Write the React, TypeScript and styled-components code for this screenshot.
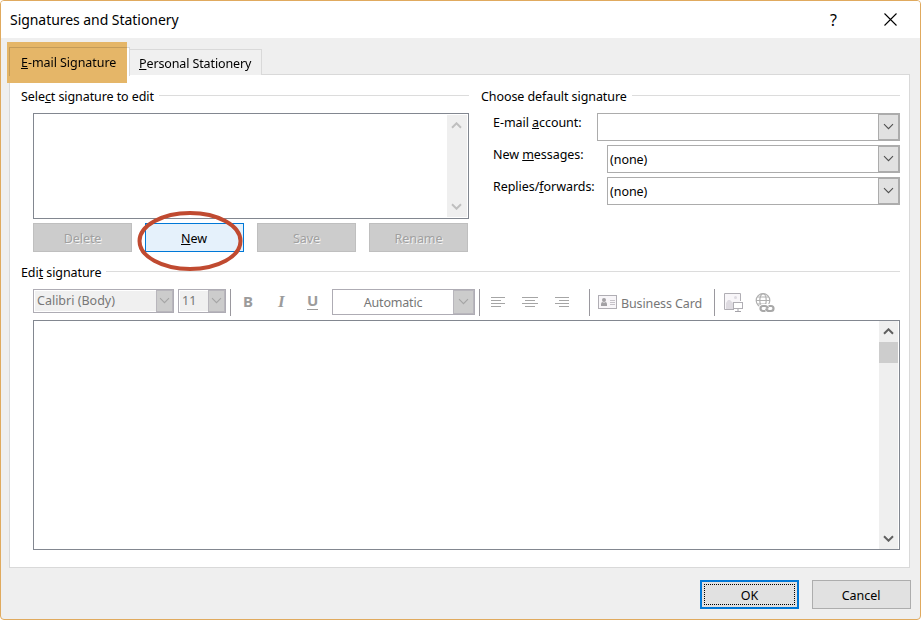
import type { ReactNode } from 'react';
import styled, { createGlobalStyle, css } from 'styled-components';

const GlobalStyle = createGlobalStyle`
  * {
    box-sizing: border-box;
  }

  body {
    margin: 0;
    background: #fff;
  }

  button {
    font: inherit;
    letter-spacing: inherit;
    margin: 0;
  }
`;

const Window = styled.div`
  position: relative;
  width: 921px;
  height: 620px;
  border: 1px solid #e0aa5e;
  border-radius: 4px;
  background: #efefef;
  color: #000;
  font-family: 'Noto Sans', 'Open Sans', sans-serif;
  font-size: 12.5px;
  letter-spacing: -0.05px;
  line-height: 18px;
  overflow: hidden;
  white-space: nowrap;
`;

const TitleBar = styled.header`
  display: flex;
  align-items: center;
  height: 37px;
  padding: 0 23px 0 9px;
  background: #fff;
`;

const Title = styled.h1`
  margin: 0 auto 0 0;
  font-size: 14px;
  font-weight: 400;
  letter-spacing: -0.05px;
`;

const TitleButton = styled.button`
  display: flex;
  padding: 0;
  border: 0;
  background: none;
  font-size: 16px;

  & + & {
    margin-left: 47px;
  }
`;

const Tabs = styled.div`
  display: flex;
  align-items: flex-end;
  height: 37px;
  padding: 0 8px;
  position: relative;
  z-index: 1;
`;

const Tab = styled.div<{ $active?: boolean }>`
  border: 1px solid #d9d9d9;
  border-bottom: 0;

  ${props =>
    props.$active
      ? css`
          width: 121px;
          height: 29px;
          margin-bottom: -1px;
          padding: 6px 0 0 11px;
          background: #fff;
        `
      : css`
          width: 132px;
          height: 26px;
          padding: 5px 0 0 9px;
          border-left: 0;
          background: #f0f0f0;
          letter-spacing: -0.12px;
        `}
`;

const TabHighlight = styled.div`
  position: absolute;
  left: 6px;
  top: 4px;
  width: 120px;
  height: 41px;
  background: #e5b668;
  mix-blend-mode: multiply;
`;

const Panel = styled.main`
  width: 901px;
  height: 494px;
  margin-left: 8px;
  margin-top: -1px;
  padding: 13px 9px 0 11px;
  border: 1px solid #d9d9d9;
  background: #fff;
`;

const Columns = styled.div`
  display: flex;
  gap: 12px;
  height: 176px;
`;

const Column = styled.section<{ $width: number }>`
  width: ${props => props.$width}px;
`;

const Legend = styled.div`
  display: flex;
  align-items: center;
  gap: 5px;
  height: 18px;
  letter-spacing: -0.08px;

  &::after {
    content: '';
    flex: 1;
    height: 1px;
    margin-bottom: 3px;
    background: #dcdcdc;
  }
`;

const SignatureList = styled.div`
  display: flex;
  justify-content: flex-end;
  width: 436px;
  height: 106px;
  margin: 7px 0 4px 12px;
  padding: 1px;
  border: 1px solid #828790;
`;

const ScrollBar = styled.div<{ $width: number; $muted?: boolean }>`
  display: flex;
  flex-direction: column;
  align-items: center;
  width: ${props => props.$width}px;
  padding: ${props => (props.$muted ? '7px 2px 7px 0' : '7px 0')};
  background: #efefef;
  color: ${props => (props.$muted ? '#bfbfbf' : '#606060')};

  svg:last-child {
    margin-top: auto;
  }
`;

const Thumb = styled.div`
  width: 100%;
  height: 21px;
  margin-top: 7px;
  background: #cdcdcd;
`;

const ButtonRow = styled.div`
  display: flex;
  gap: 13px;
  padding-left: 12px;
  position: relative;
`;

const Button = styled.button<{ $kind?: 'disabled' | 'hot' | 'default' }>`
  width: 99px;
  height: 29px;
  padding: 2px 1px 0 0;
  border: 1px solid #adadad;
  background: #e1e1e1;
  color: #000;

  ${props =>
    props.$kind === 'disabled' &&
    css`
      padding-right: 0;
      border-color: #bfbfbf;
      background: #ccc;
      color: #a0a0a0;
      text-shadow: 1px 1px 0 #f4f4f4;
    `}

  ${props =>
    props.$kind === 'hot' &&
    css`
      border-color: #0078d7;
      background: #e5f1fb;
    `}

  ${props =>
    props.$kind === 'default' &&
    css`
      padding: 0;
      border: 2px solid #0078d7;

      span {
        display: block;
        height: 21px;
        margin: 0 2px;
        padding-top: 2px;
        border: 1px dotted #000;
      }
    `}
`;

const Ring = styled.svg`
  position: absolute;
  left: 116px;
  top: -13px;
`;

const Fields = styled.div`
  padding-top: 7px;
`;

const Field = styled.div`
  display: flex;
  justify-content: space-between;
  height: 28px;
  margin: 0 0 4px 12px;
`;

const FieldLabel = styled.span`
  padding-top: 1px;
`;

const Combo = styled.div<{ $width: number; $height: number; $variant?: 'muted' | 'color' }>`
  display: flex;
  width: ${props => props.$width}px;
  height: ${props => props.$height}px;
  border: 1px solid #acacac;
  background: #fff;

  ${props =>
    props.$variant &&
    css`
      border-color: #aeacb4;
      color: #777;
    `}
`;

const ComboValue = styled.div<{ $variant?: 'muted' | 'color' }>`
  flex: 1;
  padding: 5px 0 0 2px;

  ${props =>
    props.$variant === 'muted' &&
    css`
      margin: 1px 0 1px 1px;
      padding: 1px 0 0 2px;
      background: #f0f0f0;
      letter-spacing: 0;
    `}

  ${props =>
    props.$variant === 'color' &&
    css`
      padding: 4px 0 0;
      letter-spacing: -0.2px;
      text-align: center;
    `}
`;

const ComboArrow = styled.div<{ $width: number; $disabled?: boolean }>`
  display: flex;
  align-items: center;
  justify-content: center;
  width: ${props => props.$width}px;
  padding-bottom: 1px;
  border: 1px solid ${props => (props.$disabled ? '#b8b6bc' : '#acacac')};
  background: ${props => (props.$disabled ? '#ccc' : '#e1e1e1')};
  color: ${props => (props.$disabled ? '#a5a5a5' : '#505050')};
`;

const Toolbar = styled.div`
  display: flex;
  align-items: flex-start;
  height: 31px;
  margin-top: 7px;
  padding-left: 12px;
  color: #9b9b9b;
`;

const Space = styled.div<{ $width: number }>`
  width: ${props => props.$width}px;
`;

const Separator = styled.div<{ $left: number; $right: number }>`
  width: 1px;
  height: 27px;
  margin: 0 ${props => props.$right}px 0 ${props => props.$left}px;
  background: #9a989e;
`;

const FormatGlyph = styled.span<{ $left: number; $width: number; $look: 'b' | 'i' | 'u' }>`
  width: ${props => props.$width}px;
  margin: 3px 0 0 ${props => props.$left}px;
  font-size: 15px;
  font-weight: 700;

  ${props =>
    props.$look === 'i' &&
    css`
      margin-top: 4px;
      font-family: 'Liberation Serif', serif;
      font-size: 17px;
      font-style: italic;
    `}

  ${props =>
    props.$look === 'u' &&
    css`
      height: 18px;
      border-bottom: 1px solid #9b9b9b;
      line-height: 17px;
      text-align: center;
    `}
`;

const ToolIcon = styled.svg<{ $left: number; $top: number }>`
  flex: none;
  margin: ${props => props.$top}px 0 0 ${props => props.$left}px;
`;

const ToolLabel = styled.span`
  width: 83px;
  padding: 6px 0 0 4px;
  color: #777;
  letter-spacing: -0.12px;
`;

const Editor = styled.div`
  display: flex;
  justify-content: flex-end;
  width: 867px;
  height: 230px;
  margin-left: 12px;
  padding-right: 1px;
  border: 1px solid #828790;
`;

const Footer = styled.footer`
  display: flex;
  justify-content: flex-end;
  gap: 13px;
  padding: 12px 9px 0 0;
`;

function Chevron({ up, heavy }: { up?: boolean; heavy?: boolean }) {
  return (
    <svg width="11" height="7" viewBox="0 0 11 7" fill="none" stroke="currentColor">
      <path
        d={up ? 'M1 5.8 5.5 1.3 10 5.8' : 'M1 1.2 5.5 5.7 10 1.2'}
        strokeWidth={heavy ? 2 : 1.1}
      />
    </svg>
  );
}

function Dropdown({
  width,
  height = 28,
  arrow = 21,
  variant,
  children,
}: {
  width: number;
  height?: number;
  arrow?: number;
  variant?: 'muted' | 'color';
  children?: ReactNode;
}) {
  return (
    <Combo $width={width} $height={height} $variant={variant}>
      <ComboValue $variant={variant}>{children}</ComboValue>
      <ComboArrow $width={arrow} $disabled={!!variant}>
        <Chevron />
      </ComboArrow>
    </Combo>
  );
}

function AlignIcon({ left, lines }: { left: number; lines: [number, number][] }) {
  return (
    <ToolIcon $left={left} $top={8} width="16" height="11" stroke="#a5a5a5">
      {lines.map(([x, w], i) => (
        <path key={i} d={`M${x} ${i * 3 + 0.5}h${w}`} />
      ))}
    </ToolIcon>
  );
}

function CardIcon() {
  return (
    <ToolIcon $left={0} $top={6} width="19" height="14" fill="none" stroke="#b0aeb4">
      <rect x="0.5" y="0.5" width="18" height="13" fill="#f8f6f9" />
      <circle cx="6" cy="5" r="2" fill="#a3a1a5" stroke="none" />
      <path d="M3 11V9q0-2 2-2l1 1 1-1q2 0 2 2v2z" fill="#a3a1a5" stroke="none" />
      <path d="M12 5.5h5M12 7.5h5M12 9.5h5" stroke="#c5c2c8" />
    </ToolIcon>
  );
}

function PictureIcon() {
  return (
    <ToolIcon $left={9} $top={4} width="20" height="20" fill="none" stroke="#b0aeb4">
      <path d="M10 16.5H.5V.5h16V8" fill="#f8f6f9" />
      <path d="M2 16v-6l2-3h2l4 4v5z" fill="#dedbe1" stroke="none" />
      <circle cx="11.5" cy="4.5" r="1.5" fill="#dedbe1" stroke="none" />
      <rect x="9.5" y="9.5" width="9" height="6" fill="#fff" />
      <path d="M14 16v2M11 18.5h6" stroke="#a5a3a9" />
    </ToolIcon>
  );
}

function HyperlinkIcon() {
  return (
    <ToolIcon $left={11} $top={4} width="20" height="20" fill="none" stroke="#b0b0b0">
      <g strokeWidth="1.2">
        <circle cx="8" cy="7.5" r="6.8" />
        <ellipse cx="8" cy="7.5" rx="3.2" ry="6.8" />
        <path d="M1 7.5h14M2.2 4h11.6M2.2 11h9" />
      </g>
      <rect x="4" y="11" width="16" height="9" rx="4" fill="#fff" stroke="none" />
      <g strokeWidth="2.2" stroke="#a8a8a8">
        <path d="M10.500 18H8a2.500 2.500 0 0 1 0-5h2q2 0 3 2.500" />
        <path d="M13.500 13H16a2.500 2.500 0 0 1 0 5h-2q-2 0-3-2.500" />
      </g>
    </ToolIcon>
  );
}

export default function App() {
  return (
    <>
      <GlobalStyle />
      <Window>
        <TitleBar>
          <Title>Signatures and Stationery</Title>
          <TitleButton>?</TitleButton>
          <TitleButton aria-label="Close">
            <svg width="13" height="13" stroke="#000" strokeWidth="1.1">
              <path d="M.5.5l12 12M12.5.5l-12 12" />
            </svg>
          </TitleButton>
        </TitleBar>

        <Tabs>
          <Tab $active>
            <u>E</u>-mail Signature
          </Tab>
          <Tab>
            <u>P</u>ersonal Stationery
          </Tab>
          <TabHighlight />
        </Tabs>

        <Panel>
          <Columns>
            <Column $width={448}>
              <Legend>
                <span>
                  Sele<u>c</u>t signature to edit
                </span>
              </Legend>
              <SignatureList>
                <ScrollBar $width={20} $muted>
                  <Chevron up heavy />
                  <Chevron heavy />
                </ScrollBar>
              </SignatureList>
              <ButtonRow>
                <Button $kind="disabled">Delete</Button>
                <Button $kind="hot">
                  <u>N</u>ew
                </Button>
                <Button $kind="disabled">Save</Button>
                <Button $kind="disabled">Rename</Button>
                <Ring width="107" height="62" fill="none" stroke="#c04a30" strokeWidth="4">
                  <ellipse cx="53" cy="31" rx="50.5" ry="28" />
                </Ring>
              </ButtonRow>
            </Column>

            <Column $width={419}>
              <Legend>
                <span>Choose default signature</span>
              </Legend>
              <Fields>
                <Field>
                  <FieldLabel>
                    E-mail <u>a</u>ccount:
                  </FieldLabel>
                  <Dropdown width={303} />
                </Field>
                <Field>
                  <FieldLabel>
                    New <u>m</u>essages:
                  </FieldLabel>
                  <Dropdown width={293}>(none)</Dropdown>
                </Field>
                <Field>
                  <FieldLabel>
                    Replies/<u>f</u>orwards:
                  </FieldLabel>
                  <Dropdown width={293}>(none)</Dropdown>
                </Field>
              </Fields>
            </Column>
          </Columns>

          <Legend>
            <span>
              Edi<u>t</u> signature
            </span>
          </Legend>
          <Toolbar>
            <Dropdown width={141} height={24} arrow={17} variant="muted">
              Calibri (Body)
            </Dropdown>
            <Space $width={4} />
            <Dropdown width={48} height={24} arrow={17} variant="muted">
              11
            </Dropdown>
            <Separator $left={4} $right={12} />
            <FormatGlyph $left={0} $width={11} $look="b">
              B
            </FormatGlyph>
            <FormatGlyph $left={24} $width={9} $look="i">
              I
            </FormatGlyph>
            <FormatGlyph $left={20} $width={11} $look="u">
              U
            </FormatGlyph>
            <Space $width={14} />
            <Dropdown width={143} height={26} variant="color">
              Automatic
            </Dropdown>
            <Separator $left={4} $right={11} />
            <AlignIcon left={0} lines={[[0, 14], [0, 10], [0, 14], [0, 10]]} />
            <AlignIcon left={15} lines={[[0, 16], [3, 10], [0, 16], [3, 10]]} />
            <AlignIcon left={17} lines={[[0, 14], [4, 10], [0, 14], [4, 10]]} />
            <Separator $left={18} $right={8} />
            <CardIcon />
            <ToolLabel>Business Card</ToolLabel>
            <Separator $left={14} $right={0} />
            <PictureIcon />
            <HyperlinkIcon />
          </Toolbar>
          <Editor>
            <ScrollBar $width={19}>
              <Chevron up heavy />
              <Thumb />
              <Chevron heavy />
            </ScrollBar>
          </Editor>
        </Panel>

        <Footer>
          <Button $kind="default">
            <span>OK</span>
          </Button>
          <Button>Cancel</Button>
        </Footer>
      </Window>
    </>
  );
}
